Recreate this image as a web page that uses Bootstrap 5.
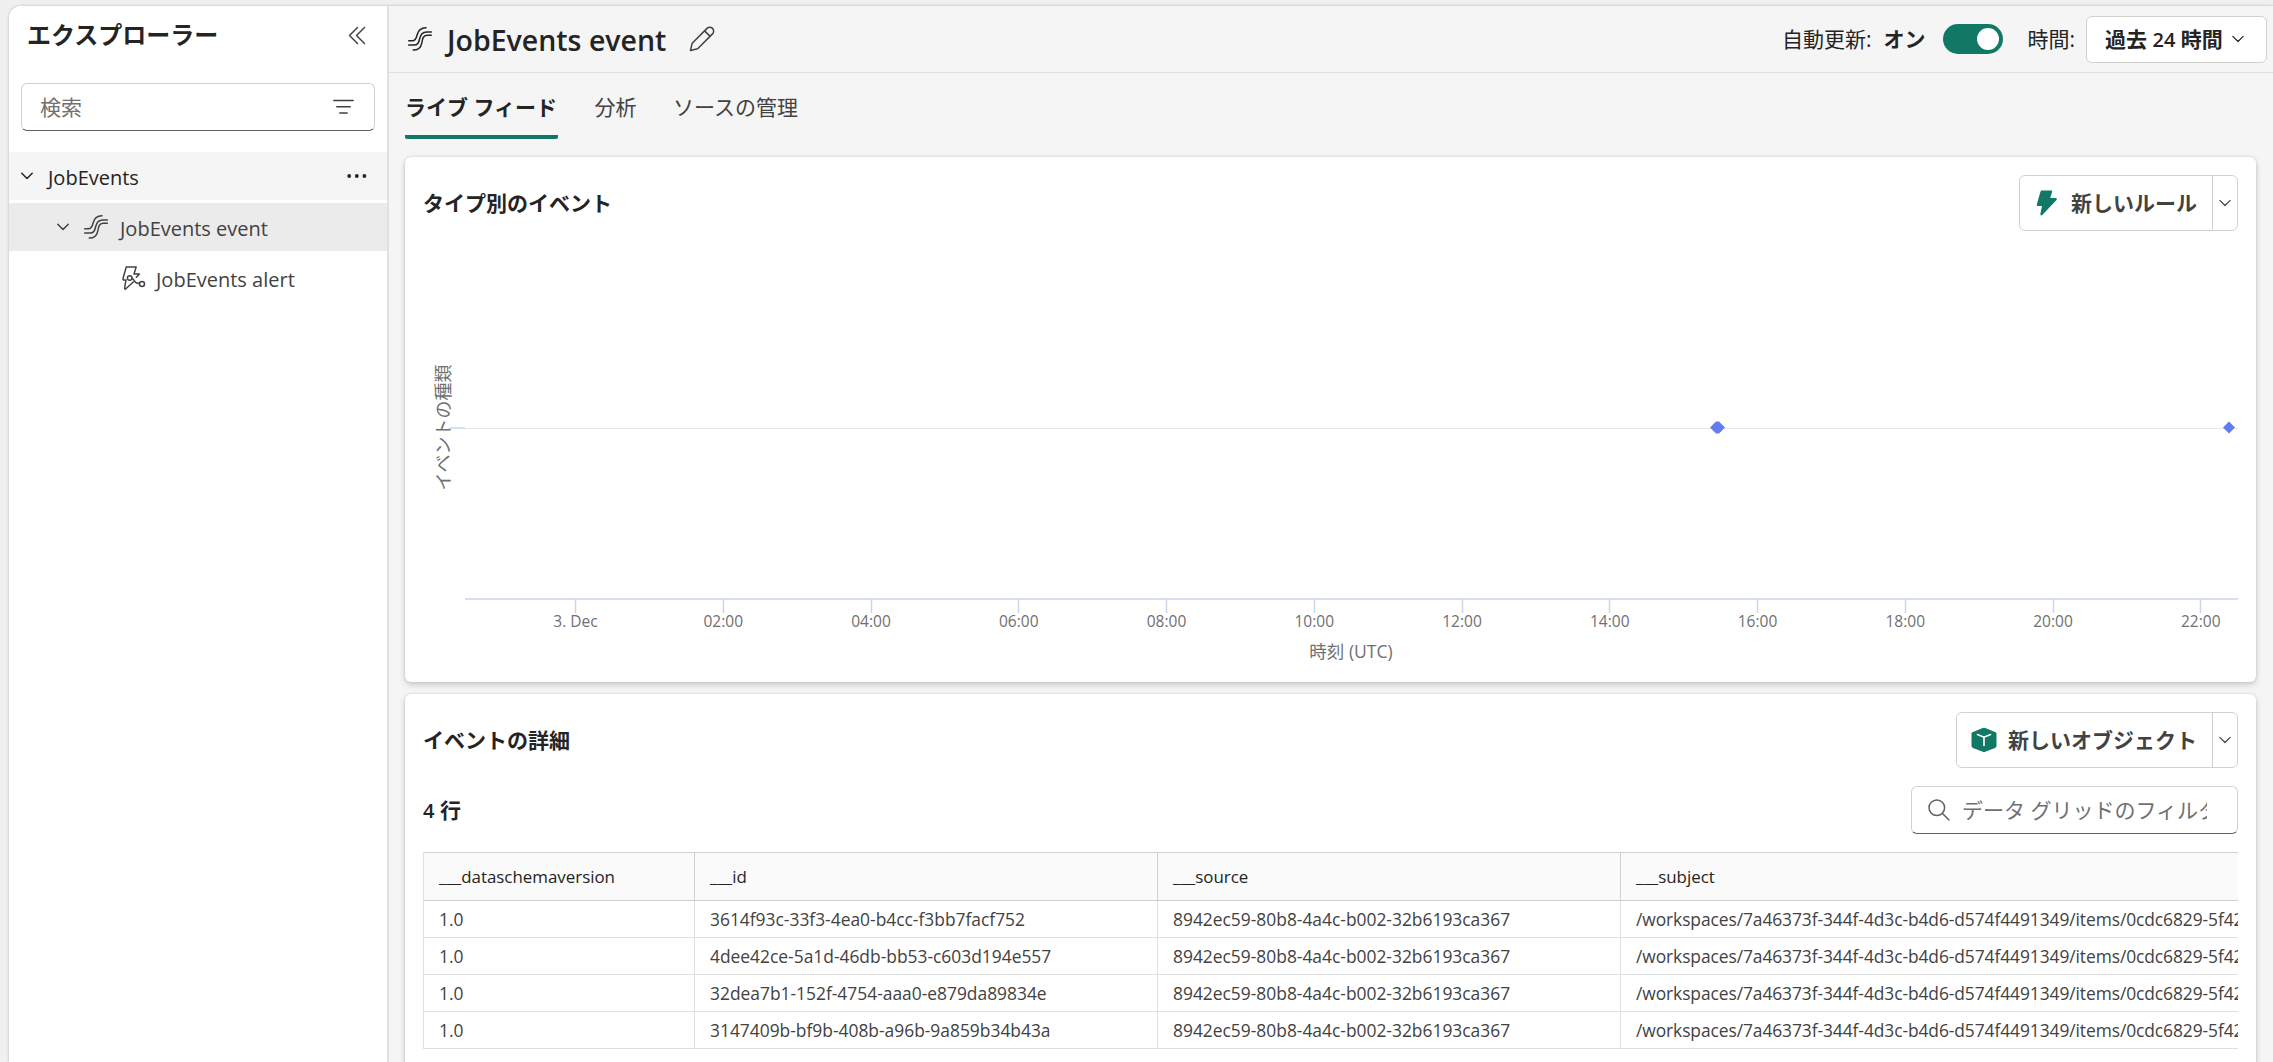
<!DOCTYPE html>
<html lang="ja">
<head>
<meta charset="utf-8">
<title>JobEvents event</title>
<link href="https://cdn.jsdelivr.net/npm/bootstrap@5.3.0/dist/css/bootstrap.min.css" rel="stylesheet">
<style>
:root{--green:#117865;--ink:#242424;--ink2:#424242;--line:#d1d1d1}
html,body{height:100%;overflow:hidden}
body{background:#f0f0f0;color:var(--ink);font-family:"Open Sans","Noto Sans CJK JP",sans-serif;font-size:21px;line-height:28px;padding:6px 0 0 9px}
svg{display:block;flex:none}
.ic{fill:none;stroke:currentColor;stroke-width:1.5;stroke-linecap:round;stroke-linejoin:round}
.lat{font-size:20px}
.shell{height:1056px;border-top-left-radius:12px;overflow:hidden;box-shadow:0 0 3px rgba(0,0,0,.25)}
.side{width:380px;background:#fff;border-right:2px solid #e0e0e0}
.side-head{height:77px;padding:15px 21px 0 18px}
.side-head h2{font-size:24px;font-weight:700;line-height:28px;margin:0}
.field{height:48px;border:1px solid var(--line);border-bottom:1.5px solid #616161;border-radius:6px;background:#fff;color:#707070}
.side .field{margin:0 12px 21px;padding:0 20px 0 18px}
.node{height:48px;margin-bottom:3px;color:var(--ink2)}
.node span{padding-top:3px}
.top{height:67px;border-bottom:1px solid #e0e0e0;padding:0 6px 0 19px}
.top h1{font-size:28.5px;font-weight:600;line-height:38px;margin:0;padding-top:2px}
.main{background:#f5f5f5}
.pick{width:181px;height:47px;border:1px solid var(--line);border-radius:6px;background:#fff;padding:0 22px 0 18px;font-weight:700}
.switch{width:60px;height:30px;border-radius:15px;background:var(--green);padding:4px}
.knob{width:22px;height:22px;border-radius:50%;background:#fff}
.tabs{height:84px;padding:20px 0 0 16px;gap:36.5px;color:var(--ink2)}
.tabs .tab{height:46px;line-height:28px}
.tabs .on{color:var(--ink);font-weight:700;border-bottom:4px solid var(--green);border-radius:0 0 2px 2px;width:153px;white-space:nowrap}
.panel{width:1851px;margin-left:16px;background:#fff;border-radius:6px;box-shadow:0 0 3px rgba(0,0,0,.14),0 3px 6px rgba(0,0,0,.16);padding:18px 18px 0}
.panel h3{font-size:21px;font-weight:700;line-height:28px;margin:0}
.split{height:56px;border:1px solid var(--line);border-radius:6px;color:var(--ink2);font-weight:700}
.split .arrow{width:25px;border-left:1px solid var(--line)}
.filter{width:327px;padding:0 30px 0 16px}
.grid-wrap{overflow:hidden;width:1815px}
.grid{table-layout:fixed;width:2084px;border-collapse:separate;border-spacing:0;font-size:17.4px;line-height:24px;color:var(--ink2);border-left:1px solid #e0e0e0}
.grid th{height:49px;background:#fafafa;font-size:16.9px;font-weight:400;color:var(--ink);border-top:1px solid var(--line);border-bottom:1px solid var(--line);border-right:1px solid var(--line);padding:0 15px}
.grid td{height:37px;border-bottom:1px solid #e0e0e0;border-right:1px solid #e0e0e0;padding:0 15px;white-space:nowrap}
.grid td:last-child{letter-spacing:-.08px}
</style>
</head>
<body>
<svg width="0" height="0" class="position-absolute"><defs>
<symbol id="stream" viewBox="0 0 24 24"><path d="M.7 13.8h3.6c3.2 0 4-2.4 4.8-5.8C10.1 3.600 12.600.8 18 .8M.7 18.100h5c4.300 0 5.200-2.900 6-6.600.9-4.300 2.700-6.600 7-6.600h4.600M5.200 23.100c5.200 0 7.600-2.500 8.500-6.800.9-5 1.600-8.100 5.300-8.100h4.300"/></symbol>
<symbol id="chev" viewBox="0 0 12 12"><path d="M.8 3.300 6 8.500l5.200-5.200"/></symbol>
</defs></svg>
<div class="shell d-flex">
  <aside class="side flex-shrink-0">
    <div class="side-head d-flex justify-content-between align-items-start">
      <h2>エクスプローラー</h2>
      <svg class="ic mt-1" width="18" height="22" viewBox="0 0 18 22" style="color:#424242"><path d="M9.500 2.500 1.500 10.500l8 8M16.500 2.500l-8 8 8 8"/></svg>
    </div>
    <div class="field d-flex align-items-center justify-content-between">
      <span>検索</span>
      <svg class="ic" width="21" height="16" viewBox="0 0 21 16" style="color:#424242"><path d="M.8 1.500h19.400M3.800 7.700h13.400M6.800 13.900h7.400"/></svg>
    </div>
    <div class="node d-flex align-items-center lat" style="background:#f5f5f5;color:#242424;padding:0 20px 0 12px">
      <svg class="ic" width="12" height="12"><use href="#chev"/></svg><span style="margin-left:15px">JobEvents</span>
      <svg class="ms-auto" width="20" height="6" viewBox="0 0 20 6" fill="#242424"><circle cx="2.200" cy="3" r="1.900"/><circle cx="9.800" cy="3" r="1.900"/><circle cx="17.400" cy="3" r="1.900"/></svg>
    </div>
    <div class="node d-flex align-items-center lat" style="background:#ebebeb;padding-left:48px">
      <svg class="ic" width="12" height="12"><use href="#chev"/></svg>
      <svg class="ic" width="24" height="24" style="margin:0 12px 0 15px"><use href="#stream"/></svg><span>JobEvents event</span>
    </div>
    <div class="node d-flex align-items-center lat" style="padding-left:113px">
      <svg class="ic" width="24" height="24" viewBox="0 0 24 24"><path d="M1 12.500 4.300.9h9.900L12 8h5.400l-3 3.200M1 12.500c-.2 1 .3 1.600 1.200 1.600h1.700L2.600 22.200c-.1.900.7 1.200 1.300.6l7.400-6.800M9.900 12.500c2.200.4 2.200 3 3.900 4 1.100.6 2.300.8 3.600 1.100"/><circle cx="7.700" cy="12" r="2.300"/><circle cx="20" cy="18.100" r="2.500"/></svg>
      <span style="margin-left:10px">JobEvents alert</span>
    </div>
  </aside>
  <main class="main flex-grow-1">
    <header class="top d-flex align-items-center">
      <svg class="ic" width="24" height="24"><use href="#stream"/></svg>
      <h1 style="margin-left:15px">JobEvents event</h1>
      <svg class="ic" width="26" height="26" viewBox="0 0 26 26" style="margin-left:23px;color:#424242"><path d="M1.500 24.500 3.200 17.200 18 2.400a3.850 3.850 0 0 1 5.500 5.500L8.700 22.700ZM15.600 4.900l5.500 5.500"/></svg>
      <div class="ms-auto d-flex align-items-center">
        <span>自動更新:</span><b style="margin-left:12px">オン</b>
        <div class="switch d-flex justify-content-end" style="margin-left:18px"><div class="knob"></div></div>
        <span style="margin-left:24px">時間:</span>
        <div class="pick d-flex align-items-center justify-content-between" style="margin-left:11px"><span>過去 <span class="lat fw-semibold">24</span> 時間</span><svg class="ic" width="12" height="12" style="stroke-width:1.200"><use href="#chev"/></svg></div>
      </div>
    </header>
    <nav class="tabs d-flex"><div class="tab on">ライブ フィード</div><div class="tab">分析</div><div class="tab">ソースの管理</div></nav>
    <section class="panel" style="height:525px">
      <div class="d-flex justify-content-between align-items-center">
        <h3>タイプ別のイベント</h3>
        <div class="split d-flex">
          <div class="d-flex align-items-center" style="padding:0 15px 0 16px">
            <svg width="22" height="26" viewBox="0 0 22 26" fill="#117865"><path d="M6 .5h9.200c.8 0 1.200.6 1 1.300L14.200 8h5.500c1.200 0 1.600 1.200.8 2L6.300 25c-.9.900-2.200.3-1.900-.9L6 16H2c-.9 0-1.400-.7-1.200-1.500L4.500 1.600C4.700.9 5.300.5 6 .5Z"/></svg>
            <span style="margin-left:13px">新しいルール</span>
          </div>
          <div class="arrow d-flex align-items-center justify-content-center"><svg class="ic" width="12" height="12" style="stroke-width:1.200"><use href="#chev"/></svg></div>
        </div>
      </div>
      <svg id="chart" width="1815" height="440" viewBox="423 231 1815 440" font-size="15.500" fill="#707070" text-anchor="middle">
        <path d="M465 428.500H2238" stroke="#e6e6e6"/><path d="M450 428H465M465 599H2238" stroke="#ccd6eb" stroke-width="1.500"/>
        <path d="M1710 427.500l6-6h3l6 6-6 6h-3ZM2223 427.500l6-6 6 6-6 6Z" fill="#637cef"/>
        <text transform="translate(449.500 427.500) rotate(-90)" font-size="18">イベントの種類</text>
        <text x="1351" y="658" font-size="17.500">時刻 (UTC)</text>
      </svg>
    </section>
    <section class="panel" style="height:400px;margin-top:12px">
      <div class="d-flex justify-content-between align-items-center">
        <h3>イベントの詳細</h3>
        <div class="split d-flex">
          <div class="d-flex align-items-center" style="padding:0 15px 0 14px">
            <svg width="26" height="26" viewBox="0 0 26 26"><path d="M11.800 1a3 3 0 0 1 2.400 0l9.800 3.900c1 .4 1.500 1 1.500 2v11.900c0 1-.5 1.700-1.500 2.100L14.200 24.800a3 3 0 0 1-2.400 0L2 20.900c-1-.4-1.500-1.100-1.500-2.100V6.900c0-1 .5-1.600 1.500-2Z" fill="#117865"/><path d="M6.500 7.500 13 10.200l6.500-2.700M13 10.200v8.300" fill="none" stroke="#fff" stroke-width="1.600" stroke-linecap="round"/></svg>
            <span style="margin-left:11px">新しいオブジェクト</span>
          </div>
          <div class="arrow d-flex align-items-center justify-content-center"><svg class="ic" width="12" height="12" style="stroke-width:1.200"><use href="#chev"/></svg></div>
        </div>
      </div>
      <div class="d-flex justify-content-between align-items-center" style="margin:18px 0">
        <h3><span class="lat fw-semibold">4</span> 行</h3>
        <div class="field filter d-flex align-items-center">
          <svg class="ic" width="22" height="22" viewBox="0 0 22 22" style="color:#616161"><circle cx="8.800" cy="8.800" r="7.800"/><path d="m14.500 14.500 6.500 6.500"/></svg>
          <span class="overflow-hidden text-nowrap" style="margin-left:12px">データ グリッドのフィルター</span>
        </div>
      </div>
      <div class="grid-wrap">
        <table class="grid">
          <colgroup><col style="width:271px"><col style="width:463px"><col style="width:463px"><col></colgroup>
          <thead><tr><th>___dataschemaversion</th><th>___id</th><th>___source</th><th>___subject</th></tr></thead>
          <tbody id="rows"></tbody>
        </table>
      </div>
    </section>
  </main>
</div>
<script src="https://cdn.jsdelivr.net/npm/bootstrap@5.3.0/dist/js/bootstrap.bundle.min.js"></script>
<script>
const ids=['3614f93c-33f3-4ea0-b4cc-f3bb7facf752','4dee42ce-5a1d-46db-bb53-c603d194e557','32dea7b1-152f-4754-aaa0-e879da89834e','3147409b-bf9b-408b-a96b-9a859b34b43a'];
document.getElementById('rows').innerHTML=ids.map(id=>`<tr><td>1.0</td><td>${id}</td><td>8942ec59-80b8-4a4c-b002-32b6193ca367</td><td>/workspaces/7a46373f-344f-4d3c-b4d6-d574f4491349/items/0cdc6829-5f42</td></tr>`).join('');
const labels=['3. Dec','02:00','04:00','06:00','08:00','10:00','12:00','14:00','16:00','18:00','20:00','22:00'];
document.getElementById('chart').insertAdjacentHTML('beforeend',labels.map((t,i)=>{const x=575+i*147.75;return `<path d="M${Math.round(x)+.5} 599v14" stroke="#ccd6eb" stroke-width="1.500"/><text x="${x+.5}" y="627">${t}</text>`}).join(''));
</script>
</body>
</html>
